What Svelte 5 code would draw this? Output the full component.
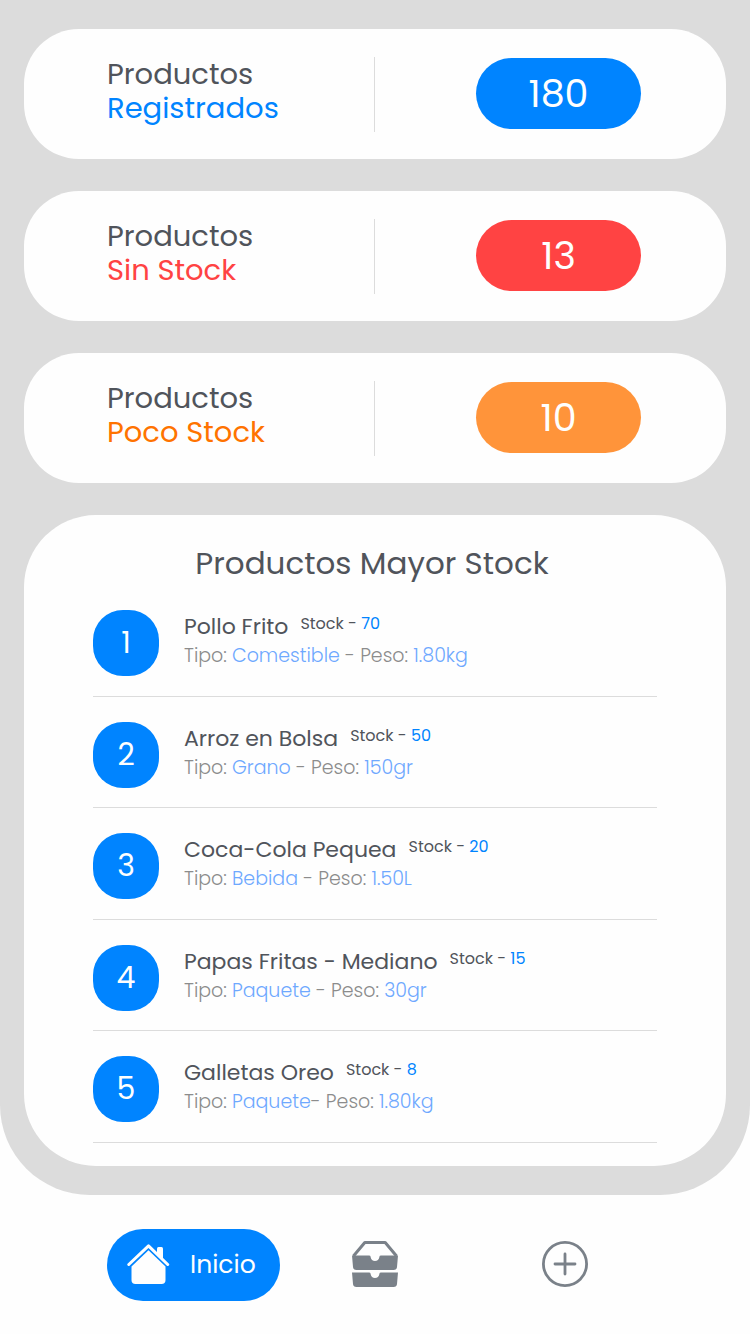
<script>
  const stats = [
    { label: 'Registrados', value: 180, tone: 'blue' },
    { label: 'Sin Stock', value: 13, tone: 'red' },
    { label: 'Poco Stock', value: 10, tone: 'orange' }
  ];

  const products = [
    { name: 'Pollo Frito', stock: 70, type: 'Comestible', dash: ' - ', weight: '1.80kg' },
    { name: 'Arroz en Bolsa', stock: 50, type: 'Grano', dash: ' - ', weight: '150gr' },
    { name: 'Coca-Cola Pequea', stock: 20, type: 'Bebida', dash: ' - ', weight: '1.50L' },
    { name: 'Papas Fritas - Mediano', stock: 15, type: 'Paquete', dash: ' - ', weight: '30gr' },
    { name: 'Galletas Oreo', stock: 8, type: 'Paquete', dash: '- ', weight: '1.80kg' }
  ];
</script>

<main>
  {#each stats as stat}
    <section class="stat {stat.tone}">
      <h2><span>Productos</span> <span class="label">{stat.label}</span></h2>
      <div class="count"><strong>{stat.value}</strong></div>
    </section>
  {/each}

  <section class="top">
    <h1>Productos Mayor Stock</h1>
    <ol>
      {#each products as product, i}
        <li>
          <span class="rank">{i + 1}</span>
          <div class="info">
            <div class="line">
              <span class="name">{product.name}</span>
              <span class="stock">Stock - <b>{product.stock}</b></span>
            </div>
            <p>Tipo: <b>{product.type}</b>{product.dash}Peso: <b>{product.weight}</b></p>
          </div>
        </li>
      {/each}
    </ol>
  </section>
</main>

<nav>
  <button class="home">
    <svg width="44" height="42" viewBox="0 0 44 42" aria-hidden="true">
      <path d="M2.500 21.500 22.500 1.800 42 21.500" fill="none" stroke="#0084ff" stroke-width="6" />
      <path d="M2.800 20.500 22.500 1.900 41.700 20.500" fill="none" stroke="currentColor" stroke-width="3" stroke-linecap="round" stroke-linejoin="round" />
      <path d="M31 10.500V4.500q0-1.500 1.500-1.500h3q1.500 0 1.500 1.500V16.500Z" fill="currentColor" />
      <path d="M22.500 6.300 39.500 22.500V36q0 4-4 4H9.500q-4 0-4-4V22.500Z" fill="currentColor" />
    </svg>
    Inicio
  </button>
  <button class="icon" aria-label="Inventario">
    <svg width="46" height="46" viewBox="0 0 46 46" aria-hidden="true">
      <path d="M1.500 15 12.800 1.500H33.200L44.500 15" fill="none" stroke="currentColor" stroke-width="3" stroke-linejoin="round" />
      <path d="M0 14.500H17Q18.500 14.500 18.500 15.500C19 21.500 27 21.500 27.500 15.500Q27.500 14.500 29 14.500H46L45 26Q44.800 29 41.500 29H4.500Q1.200 29 1 26Z" fill="currentColor" />
      <path d="M0 31.500H17Q18.500 31.500 18.500 32.500C19 38.500 27 38.500 27.500 32.500Q27.500 31.500 29 31.500H46L45 43Q44.800 46 41.500 46H4.500Q1.200 46 1 43Z" fill="currentColor" />
    </svg>
  </button>
  <button class="icon" aria-label="Agregar">
    <svg width="46" height="46" viewBox="0 0 46 46" fill="none" stroke="currentColor" aria-hidden="true">
      <circle cx="23" cy="23" r="21.600" stroke-width="2.800" />
      <path d="M23 13V33M13 23H33" stroke-width="2.800" stroke-linecap="round" />
    </svg>
  </button>
</nav>

<style>
  :global(body) {
    background: #fefefe;
    font-family: Poppins, Inter, sans-serif;
    font-weight: 400;
    color: #50545b;
  }

  h1, h2, p, ol {
    margin: 0;
    padding: 0;
    font-weight: inherit;
  }

  b, strong {
    font-weight: inherit;
  }

  main {
    display: flex;
    flex-direction: column;
    gap: 32px;
    padding: 29px 24px;
    background: #dcdcdc;
    border-radius: 0 0 90px 90px;
  }

  .stat {
    display: grid;
    grid-template-columns: 1fr 1fr;
    padding: 28px 0 27px;
    background: #fefefe;
    border-radius: 55px;
  }

  .blue { --tone: #0084ff; --label: #0084ff; }
  .red { --tone: #ff4343; --label: #ff4343; }
  .orange { --tone: #ff943a; --label: #ff7300; }

  h2 {
    padding: 0 0 7px 83px;
    border-right: 1px solid #dcdcdc;
    font-size: 29px;
    line-height: 34px;
  }

  h2 span {
    display: block;
  }

  .label {
    color: var(--label);
  }

  .count {
    display: flex;
    justify-content: center;
    align-items: center;
    padding: 0 0 2px 16px;
  }

  .count strong {
    width: 165px;
    border-radius: 36px;
    background: var(--tone);
    color: #fefefe;
    font-size: 38px;
    line-height: 71px;
    text-align: center;
  }

  .top {
    padding: 27px 69px 23px;
    background: #fefefe;
    border-radius: 72px;
  }

  h1 {
    padding-right: 6px;
    font-size: 31px;
    line-height: 43px;
    text-align: center;
  }

  ol {
    display: grid;
    grid-auto-rows: 1fr;
    min-height: 558px;
    list-style: none;
  }

  li {
    display: flex;
    align-items: flex-start;
    gap: 25px;
    padding: 25px 0 19px;
    border-bottom: 1px solid #dcdcdc;
  }

  .rank {
    flex: none;
    width: 66px;
    border-radius: 30px;
    background: #0084ff;
    color: #fefefe;
    font-size: 30px;
    line-height: 66px;
    text-align: center;
  }

  .line {
    display: flex;
    align-items: flex-start;
    gap: 12px;
    line-height: 34px;
  }

  .name {
    font-size: 22px;
  }

  .stock {
    font-size: 16px;
    line-height: 28px;
  }

  .stock b {
    color: #0084ff;
  }

  p {
    color: #8c8c8c;
    font-size: 19px;
    font-weight: 300;
    line-height: 24px;
  }

  p b {
    color: #6ea8ff;
  }

  nav {
    display: grid;
    grid-template-columns: 173fr 190fr 190fr;
    align-items: center;
    justify-items: center;
    padding: 34px 90px 33px 107px;
  }

  button {
    padding: 0;
    border: 0;
    background: none;
    font: inherit;
    cursor: pointer;
  }

  svg {
    display: block;
  }

  .home {
    display: flex;
    align-items: center;
    gap: 20px;
    width: 173px;
    height: 72px;
    padding-left: 19px;
    border-radius: 36px;
    background: #0084ff;
    color: #fefefe;
    font-size: 25px;
  }

  .icon {
    padding-bottom: 2px;
    color: #7a8189;
  }
</style>
